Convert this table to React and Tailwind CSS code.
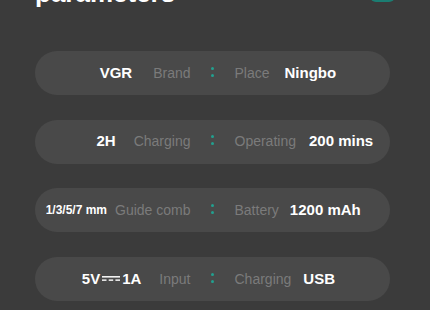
const rows = [
  { lv: 'VGR', ll: 'Brand', rl: 'Place', rv: 'Ningbo', lg: 'gap-[21px]', rg: 'gap-[15px]' },
  { lv: '2H', ll: 'Charging', rl: 'Operating', rv: '200 mins', lg: 'gap-[18px]', rg: 'gap-[13px]' },
  { lv: '1/3/5/7 mm', ll: 'Guide comb', rl: 'Battery', rv: '1200 mAh', lg: 'gap-[8px]', rg: 'gap-[11px]', small: true },
  { lv: 'dc', ll: 'Input', rl: 'Charging', rv: 'USB', lg: 'gap-[18px]', rg: 'gap-[12px]' },
];

const DcSymbol = () => (
  <svg width="18" height="8" viewBox="0 0 18 8" className="mx-[2px]">
    <rect x="0" y="1" width="18" height="1.6" fill="#f2f2f2" />
    <rect x="0" y="4.4" width="4.5" height="1.5" fill="#f2f2f2" />
    <rect x="6.7" y="4.4" width="4.5" height="1.5" fill="#f2f2f2" />
    <rect x="13.4" y="4.4" width="4.6" height="1.5" fill="#f2f2f2" />
  </svg>
);

const Row = ({ row }) => (
  <div className="h-[44px] rounded-full bg-[#494949] grid grid-cols-[1fr_44px_1fr] items-center">
    <div className={`flex items-center justify-end ${row.lg}`}>
      {row.lv === 'dc' ? (
        <span className="flex items-center text-[15px] font-bold text-white">
          5V<DcSymbol />1A
        </span>
      ) : (
        <span className={`font-bold text-white ${row.small ? 'text-[12px]' : 'text-[15px]'}`}>{row.lv}</span>
      )}
      <span className="text-[14px] text-[#7b7b7b]">{row.ll}</span>
    </div>
    <div className="flex flex-col items-center gap-[4px] -mt-[3px]">
      <span className="w-[3px] h-[3px] rounded-full bg-[#22a08f]" />
      <span className="w-[3px] h-[3px] rounded-full bg-[#22a08f]" />
    </div>
    <div className={`flex items-center justify-start ${row.rg}`}>
      <span className="text-[14px] text-[#7b7b7b]">{row.rl}</span>
      <span className="text-[15px] font-bold text-white">{row.rv}</span>
    </div>
  </div>
);

export default function App() {
  return (
    <div className="w-[430px] h-[310px] overflow-hidden bg-[#3b3b3b] font-['Liberation_Sans',Arial,sans-serif]">
      {/* header, scrolled partly out of view */}
      <div className="-mt-[20px] h-[26px] pl-[35px] pr-[35px] flex justify-between items-start">
        <h1 className="text-[26px] leading-[26px] font-bold text-white">parameters</h1>
        <div className="w-[25px] h-[22px] rounded-md bg-[#1b7d72]" />
      </div>
      <div className="mt-[45px] ml-[35px] w-[355px] flex flex-col gap-[24.7px]">
        {rows.map((r, i) => (
          <Row key={i} row={r} />
        ))}
      </div>
    </div>
  );
}
